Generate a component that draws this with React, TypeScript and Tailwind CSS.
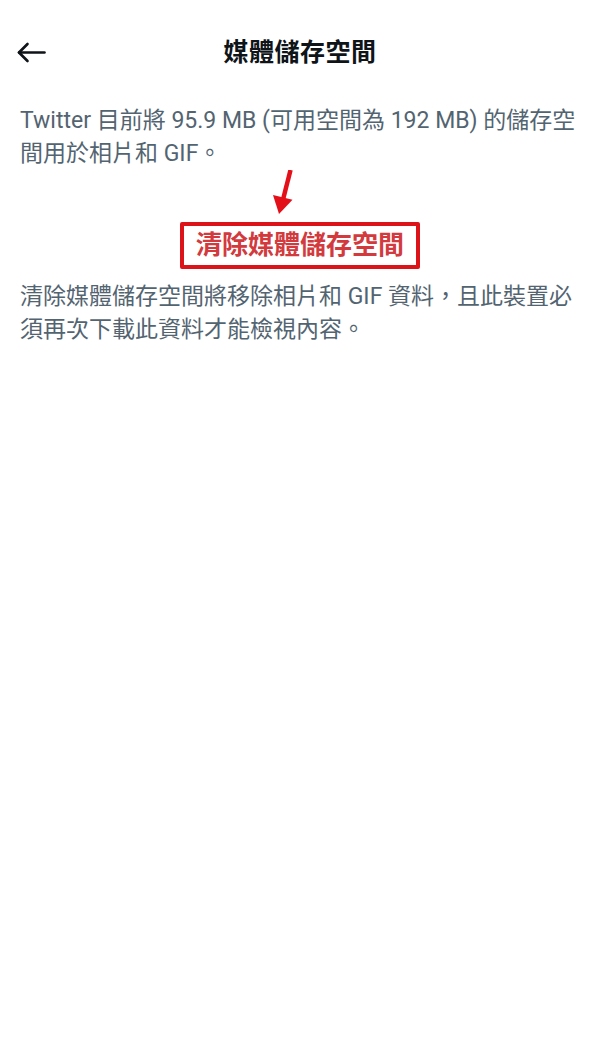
import React from "react";

export default function App() {
  const font = { fontFamily: 'Roboto, "Noto Sans CJK TC", "Noto Sans", sans-serif' };
  return (
    <div className="w-[600px] min-h-[1050px] bg-white" style={font}>
      <div className="relative h-[104px] flex items-center justify-center">
        <svg className="absolute left-[16px] top-[42px]" width="30" height="21" viewBox="0 0 30 21" fill="none">
          <path d="M3 10.5H28.5" stroke="#0f1419" strokeWidth="2.6" strokeLinecap="round" />
          <path d="M11.5 2L3 10.5L11.5 19" stroke="#0f1419" strokeWidth="2.6" strokeLinecap="round" strokeLinejoin="round" />
        </svg>
        <h1 className="text-[25px] font-bold text-[#0f1419] leading-none tracking-[0.5px]">媒體儲存空間</h1>
      </div>
      <p className="px-5 text-[23px] leading-[33px] text-[#536471]">
        Twitter 目前將 95.9 MB (可用空間為 192 MB) 的儲存空間用於相片和 GIF。
      </p>
      <div className="h-[52px] flex justify-center">
        <svg width="30" height="52" viewBox="0 0 30 52" className="ml-[-30px]">
          <path d="M20.5 0L13.2 29" stroke="#e3101a" strokeWidth="4.5" />
          <path d="M9 44L3 25L22.5 29.8Z" fill="#e3101a" />
        </svg>
      </div>
      <div className="flex justify-center">
        <div className="border-4 border-[#dc1419] px-3 py-[6px] rounded-[2px]">
          <span className="block text-[26px] leading-[27px] font-bold text-[#d23a3e]">清除媒體儲存空間</span>
        </div>
      </div>
      <p className="px-5 mt-[11px] text-[23px] leading-[33px] text-[#536471]">
        清除媒體儲存空間將移除相片和 GIF 資料，且此裝置必須再次下載此資料才能檢視內容。
      </p>
    </div>
  );
}
